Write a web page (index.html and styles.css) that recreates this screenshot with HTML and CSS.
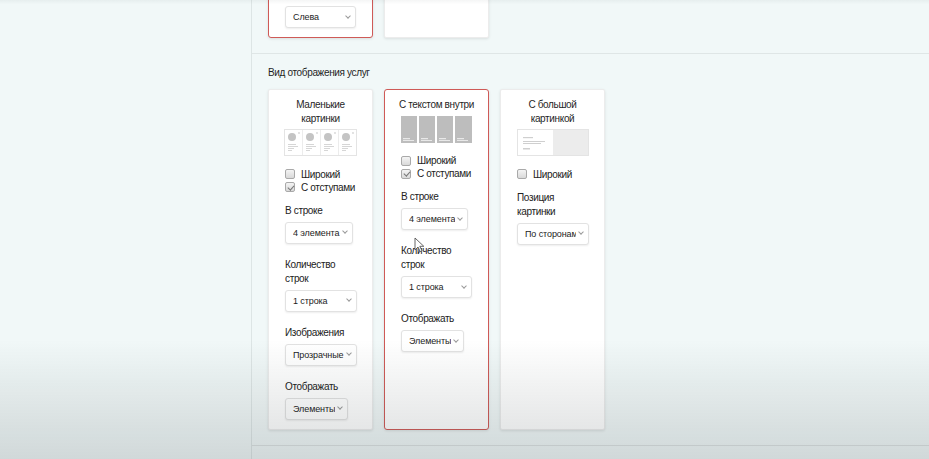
FILE: index.html
```html
<!DOCTYPE html>
<html lang="ru">
<head>
<meta charset="utf-8">
<title>Настройки блока услуг</title>
<link rel="stylesheet" href="styles.css">
</head>
<body>
<div class="layout">
  <aside class="sidebar"></aside>
  <main class="content">
    <section class="section section--top">
      <div class="option-row option-row--top">
        <div class="option-card option-card--active option-card--clipped">
          <div class="select select--w71"><span class="select-value">Слева</span><span class="chevron"></span></div>
        </div>
        <div class="option-card option-card--clipped"></div>
      </div>
    </section>

    <section class="section section--views">
      <h3 class="section-title">Вид отображения услуг</h3>
      <div class="option-row">
        <!-- small pictures -->
        <div class="option-card">
          <div class="card-title">Маленькие картинки</div>
          <svg class="thumb" width="73" height="27" viewBox="0 0 73 27">
            <rect x="0.5" y="0.5" width="72" height="26" fill="#fff" stroke="#e4e4e4"/>
            <g fill="#c4c4c4">
              <circle cx="8" cy="8" r="4"/><circle cx="26" cy="8" r="4"/><circle cx="44" cy="8" r="4"/><circle cx="62" cy="8" r="4"/>
            </g>
            <g fill="#d6d6d6">
              <circle cx="15" cy="4" r="0.9"/><circle cx="33" cy="4" r="0.9"/><circle cx="51" cy="4" r="0.9"/><circle cx="69" cy="4" r="0.9"/>
              <rect x="4" y="15" width="8" height="1"/><rect x="4" y="17" width="10" height="1"/><rect x="4" y="19" width="6" height="1"/><rect x="4" y="21" width="4" height="1"/>
              <rect x="22" y="15" width="8" height="1"/><rect x="22" y="17" width="10" height="1"/><rect x="22" y="19" width="6" height="1"/><rect x="22" y="21" width="4" height="1"/>
              <rect x="40" y="15" width="8" height="1"/><rect x="40" y="17" width="10" height="1"/><rect x="40" y="19" width="6" height="1"/><rect x="40" y="21" width="4" height="1"/>
              <rect x="58" y="15" width="8" height="1"/><rect x="58" y="17" width="10" height="1"/><rect x="58" y="19" width="6" height="1"/><rect x="58" y="21" width="4" height="1"/>
            </g>
            <g stroke="#ececec"><line x1="18.5" y1="1" x2="18.5" y2="26"/><line x1="36.5" y1="1" x2="36.5" y2="26"/><line x1="54.5" y1="1" x2="54.5" y2="26"/></g>
          </svg>
          <div class="card-body">
            <div class="checks">
              <label class="check"><span class="check-box"></span>Широкий</label>
              <label class="check"><span class="check-box check-box--on"></span>С отступами</label>
            </div>
            <div class="field">
              <div class="field-label">В строке</div>
              <div class="select select--w68"><span class="select-value">4 элемента</span><span class="chevron"></span></div>
            </div>
            <div class="field">
              <div class="field-label">Количество<br>строк</div>
              <div class="select select--w72"><span class="select-value">1 строка</span><span class="chevron"></span></div>
            </div>
            <div class="field">
              <div class="field-label">Изображения</div>
              <div class="select select--w72"><span class="select-value">Прозрачные</span><span class="chevron"></span></div>
            </div>
            <div class="field">
              <div class="field-label">Отображать</div>
              <div class="select select--w63"><span class="select-value">Элементы</span><span class="chevron"></span></div>
            </div>
          </div>
        </div>

        <!-- text inside -->
        <div class="option-card option-card--active">
          <div class="card-title">С текстом внутри</div>
          <svg class="thumb thumb--tight" width="71" height="27" viewBox="0 0 71 27">
            <g fill="#bdbdbd">
              <rect x="0" y="0" width="16" height="27"/><rect x="18" y="0" width="16" height="27"/><rect x="36" y="0" width="16" height="27"/><rect x="54" y="0" width="17" height="27"/>
            </g>
            <g fill="#e8e8e8">
              <rect x="2" y="22" width="7" height="1.2"/><rect x="20" y="22" width="7" height="1.2"/><rect x="38" y="22" width="7" height="1.2"/><rect x="56" y="22" width="7" height="1.2"/>
              <rect x="2" y="24" width="11" height="1"/><rect x="20" y="24" width="11" height="1"/><rect x="38" y="24" width="11" height="1"/><rect x="56" y="24" width="11" height="1"/>
            </g>
          </svg>
          <div class="card-body">
            <div class="checks">
              <label class="check"><span class="check-box"></span>Широкий</label>
              <label class="check"><span class="check-box check-box--on"></span>С отступами</label>
            </div>
            <div class="field">
              <div class="field-label">В строке</div>
              <div class="select select--w67"><span class="select-value">4 элемента</span><span class="chevron"></span></div>
            </div>
            <div class="field">
              <div class="field-label">Количество<br>строк</div>
              <div class="select select--w71"><span class="select-value">1 строка</span><span class="chevron"></span></div>
            </div>
            <div class="field">
              <div class="field-label">Отображать</div>
              <div class="select select--w63"><span class="select-value">Элементы</span><span class="chevron"></span></div>
            </div>
          </div>
        </div>

        <!-- big picture -->
        <div class="option-card">
          <div class="card-title">С большой картинкой</div>
          <svg class="thumb" width="72" height="27" viewBox="0 0 72 27">
            <rect x="0.5" y="0.5" width="71" height="26" fill="#fff" stroke="#e4e4e4"/>
            <rect x="36" y="1" width="35" height="25" fill="#ececec"/>
            <g fill="#cfcfcf">
              <rect x="6" y="8" width="10" height="1.2"/>
              <rect x="6" y="12" width="22" height="1"/>
              <rect x="6" y="14" width="18" height="1"/>
              <rect x="6" y="19" width="7" height="1.5"/>
            </g>
          </svg>
          <div class="card-body">
            <div class="checks">
              <label class="check"><span class="check-box"></span>Широкий</label>
            </div>
            <div class="field">
              <div class="field-label">Позиция<br>картинки</div>
              <div class="select select--w72"><span class="select-value">По сторонам</span><span class="chevron"></span></div>
            </div>
          </div>
        </div>
      </div>
    </section>

    <section class="section section--next"></section>
  </main>
</div>

<svg class="pointer" width="11" height="16" viewBox="0 0 11 16">
  <path d="M1 1 L1 13 L4 10 L6.2 14.6 L8 13.8 L5.8 9.3 L9.8 9.3 Z" fill="#fff" stroke="#555" stroke-width="0.9" stroke-linejoin="round"/>
</svg>
</body>
</html>
```

FILE: styles.css
```css
* {
  box-sizing: border-box;
}

html,
body {
  margin: 0;
  height: 100%;
  overflow: hidden;
}

body {
  background: #f1f8f8;
  font-family: "Liberation Sans", Arial, sans-serif;
  font-size: 10px;
  color: #222;
  letter-spacing: -0.35px;
}

/* soft darkening toward the bottom of the viewport */
body::after {
  content: "";
  position: fixed;
  inset: 0;
  pointer-events: none;
  background: linear-gradient(
    to bottom,
    rgba(40, 50, 50, 0.05) 0,
    rgba(40, 50, 50, 0) 4px,
    rgba(40, 50, 50, 0) 74%,
    rgba(40, 55, 55, 0.07) 85%,
    rgba(40, 50, 55, 0.16) 100%
  );
}

.layout {
  display: flex;
  height: 100%;
}

.sidebar {
  width: 252px;
  flex: none;
  border-right: 1px solid #dde5e5;
}

.content {
  flex: 1;
  display: flex;
  flex-direction: column;
}

.section {
  padding-left: 16px;
}

.section--top {
  height: 54px;
  border-bottom: 1px solid #dfe6e6;
  overflow: hidden;
  display: flex;
  align-items: flex-end;
  padding-bottom: 15px;
}

.section--views {
  padding-top: 12px;
  padding-bottom: 15px;
  border-bottom: 1px solid #dce2e2;
}

.section--next {
  flex: 1;
}

.section-title {
  margin: 0 0 9px;
  font-size: 10px;
  font-weight: normal;
  line-height: 14px;
  color: #1f1f1f;
}

.option-row {
  display: flex;
  gap: 11px;
  align-items: stretch;
}

.option-row--top {
  align-items: flex-end;
}

.option-card {
  width: 105px;
  background: #fff;
  border: 1px solid #ececec;
  border-radius: 2px;
  box-shadow: 0 1px 3px rgba(0, 0, 0, 0.1);
  padding: 8px 8px 9px;
  display: flex;
  flex-direction: column;
  align-items: center;
}

.option-card--active {
  border: 1.5px solid #cf5a57;
  border-radius: 3px;
}

.option-card--clipped {
  height: 80px;
  justify-content: flex-end;
  align-items: flex-start;
  padding: 0 8px 9px 16px;
}

.card-title {
  width: 100%;
  text-align: center;
  line-height: 14px;
  color: #1f1f1f;
}

.thumb {
  display: block;
  margin-top: 3px;
}

.thumb--tight {
  margin-top: 3.5px;
}

.card-body {
  align-self: stretch;
  padding-left: 8px;
}

.checks {
  margin-top: 11.5px;
  display: flex;
  flex-direction: column;
}

.check {
  display: flex;
  align-items: center;
  height: 13px;
  line-height: 13px;
  color: #222;
}

.check-box {
  width: 10px;
  height: 10px;
  margin-right: 6px;
  border: 1px solid #a9a9a9;
  border-radius: 2px;
  background: linear-gradient(#f4f4f4, #d9d9d9);
  position: relative;
  flex: none;
}

.check-box--on::after {
  content: "";
  position: absolute;
  left: 2.5px;
  top: 0.5px;
  width: 2.5px;
  height: 5px;
  border: solid #777;
  border-width: 0 1.3px 1.3px 0;
  transform: rotate(42deg);
}

.field {
  margin-top: 14px;
}

.checks + .field {
  margin-top: 10px;
}

.field-label {
  line-height: 14px;
  margin-bottom: 4px;
  color: #222;
}

.select {
  height: 22px;
  display: flex;
  align-items: center;
  padding: 0 5px 0 7px;
  background: #fff;
  border: 1px solid #e2e2e2;
  border-radius: 3px;
  box-shadow: 0 1px 2px rgba(0, 0, 0, 0.07);
  font-size: 9px;
  letter-spacing: -0.1px;
  color: #1c1c1c;
}

.select-value {
  flex: 1;
  overflow: hidden;
  white-space: nowrap;
}

.chevron {
  flex: none;
  width: 4px;
  height: 4px;
  margin-left: 3px;
  margin-top: -3px;
  border: solid #9a9a9a;
  border-width: 0 1px 1px 0;
  transform: rotate(45deg);
}

.select--w63 { width: 63px; }
.select--w67 { width: 67px; }
.select--w68 { width: 68px; }
.select--w71 { width: 71px; }
.select--w72 { width: 72px; }

/* mouse pointer hovering over the middle card */
.pointer {
  position: absolute;
  left: 414px;
  top: 237px;
}
```
